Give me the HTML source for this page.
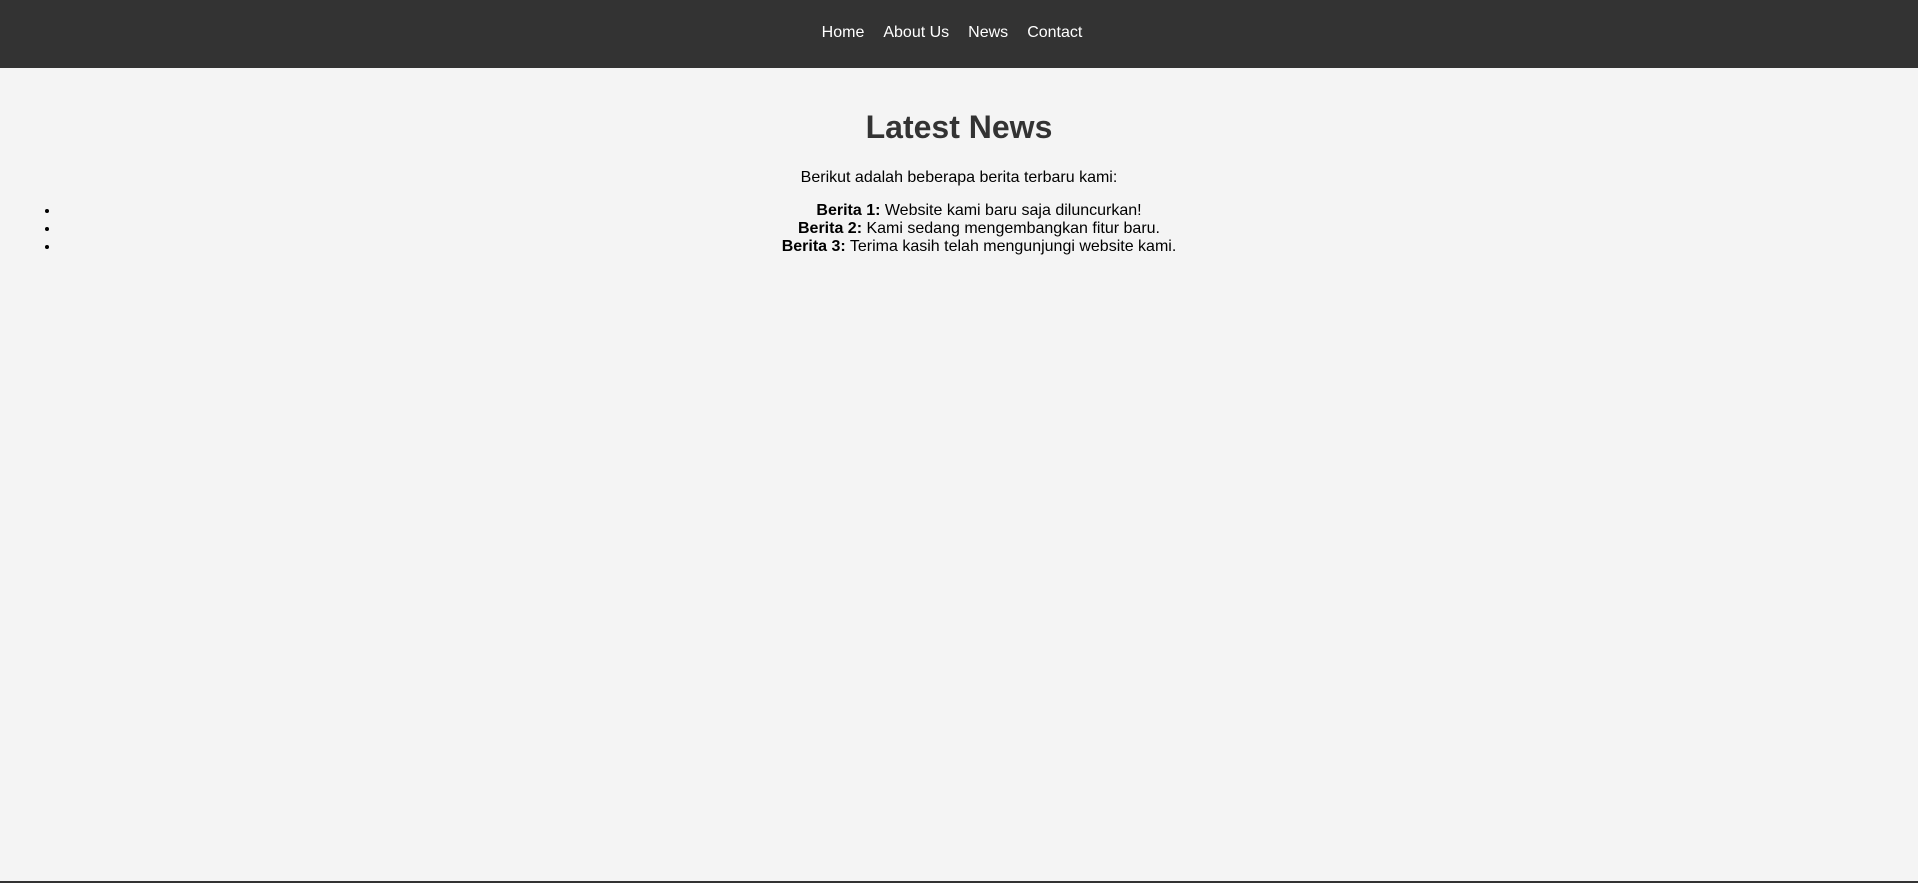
<!DOCTYPE html>
<html><head><meta charset="utf-8"><style>
html,body{margin:0;padding:0;width:1918px;height:883px;overflow:hidden;background:#f4f4f4;font-family:"Liberation Sans",Arial,sans-serif;font-size:16px;}
header{background:#333;height:68px;text-align:center;}
nav{position:relative;left:-7px;}
header a{color:#fff;text-decoration:none;display:inline-block;margin:0 9.5px;line-height:18px;padding-top:24px;}
main{padding:20px;text-align:center;}
h1{color:#333;font-size:32px;margin:21px 0 0;line-height:37px;}
p{margin:23px 0 0;line-height:18px;color:#000;}
ul{margin:15px 0 0;padding-left:40px;line-height:18px;}
li{text-align:center;}
.foot{position:absolute;left:0;top:881px;width:1918px;height:2px;background:#333;}
</style></head><body>
<header><nav><a>Home</a><a>About Us</a><a>News</a><a>Contact</a></nav></header>
<main>
<h1>Latest News</h1>
<p>Berikut adalah beberapa berita terbaru kami:</p>
<ul>
<li><strong>Berita 1:</strong> Website kami baru saja diluncurkan!</li>
<li><strong>Berita 2:</strong> Kami sedang mengembangkan fitur baru.</li>
<li><strong>Berita 3:</strong> Terima kasih telah mengunjungi website kami.</li>
</ul>
</main>
<div class="foot"></div>
</body></html>
